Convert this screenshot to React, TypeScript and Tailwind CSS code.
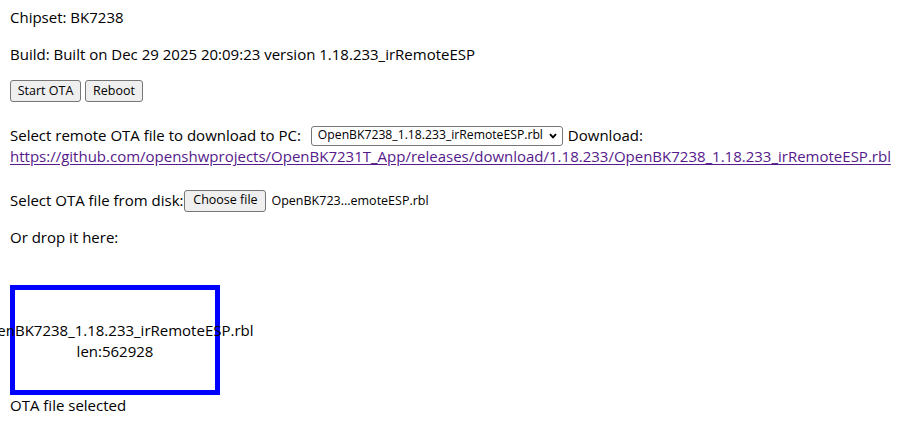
const btn =
  'h-[22px] rounded-[3px] border border-[#767676] bg-[#efefef] text-[12.5px] leading-none text-black flex items-center justify-center';

const fileName = 'OpenBK7238_1.18.233_irRemoteESP.rbl';
const downloadUrl =
  'https://github.com/openshwprojects/OpenBK7231T_App/releases/download/1.18.233/' + fileName;

export default function App() {
  return (
    <div className="min-h-screen bg-white text-black font-['Open_Sans',sans-serif] text-[15px] leading-[21px] px-[10px] pt-[7px]">
      <p>Chipset: BK7238</p>
      <p className="mt-4">Build: Built on Dec 29 2025 20:09:23 version 1.18.233_irRemoteESP</p>

      {/* OTA / reboot buttons */}
      <div className="mt-[15px] flex gap-[4px]">
        <button className={`${btn} w-[71px]`}>Start OTA</button>
        <button className={`${btn} w-[58px]`}>Reboot</button>
      </div>

      {/* remote file */}
      <div className="mt-[23px]">
        <div className="flex items-center h-[21px] whitespace-nowrap">
          <span>Select remote OTA file to download to PC:</span>
          <div className="ml-[10px] w-[252px] h-[20px] rounded-[3px] border border-[#767676] bg-white flex items-center pl-[6px] pr-[5px]">
            <span className="text-[12.2px] leading-none">{fileName}</span>
            <svg width="8" height="6" viewBox="0 0 8 6" className="ml-auto">
              <path d="M1 1.2 L4 4.4 L7 1.2" fill="none" stroke="#000" strokeWidth="1.9" />
            </svg>
          </div>
          <span className="ml-[5px]">Download:</span>
        </div>
        <a href="#" className="block text-[#551a8b] underline underline-offset-[2px]">
          {downloadUrl}
        </a>
      </div>

      {/* local file */}
      <div className="mt-[23px] flex items-center h-[21px] whitespace-nowrap">
        <span>Select OTA file from disk:</span>
        <button className={`${btn} w-[82px] h-[21px] ml-[1px]`}>Choose file</button>
        <span className="ml-[5px] text-[12.5px]">OpenBK723...emoteESP.rbl</span>
      </div>

      <p className="mt-4">Or drop it here:</p>

      {/* drop zone */}
      <div className="mt-[37px] w-[210px] h-[110px] border-[5px] border-[#0000ff] flex items-center justify-center text-center">
        <div className="whitespace-nowrap pt-[2px]">
          <div>{fileName}</div>
          <div>len:562928</div>
        </div>
      </div>

      <p>OTA file selected</p>
    </div>
  );
}
